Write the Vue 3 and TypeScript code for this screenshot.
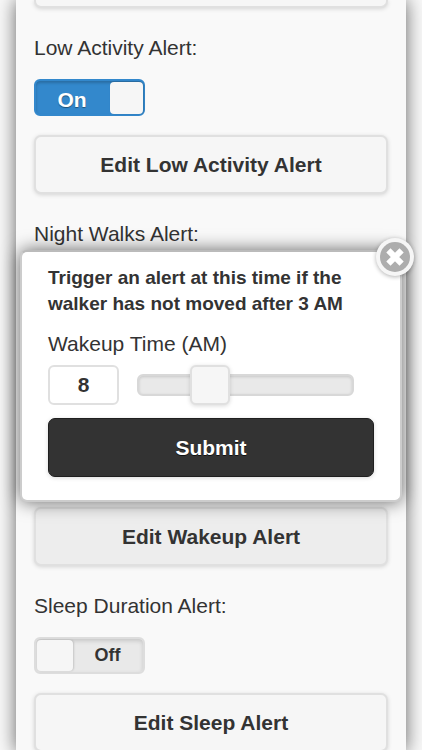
<script setup lang="ts">
import { ref } from 'vue'

const lowActivity = ref(true)
const sleepDuration = ref(false)
const wakeupHour = ref(8)
const popupOpen = ref(true)
</script>

<template>
  <div class="screen">
    <main class="sheet">
      <div class="row-edge"></div>

      <section class="group">
        <label class="caption" for="low-activity">Low Activity Alert:</label>
        <span class="switch" :class="{ on: lowActivity }">
          <input id="low-activity" v-model="lowActivity" type="checkbox" role="switch" />
          <span class="state">{{ lowActivity ? 'On' : 'Off' }}</span>
          <span class="knob"></span>
        </span>
        <button class="btn" type="button">Edit Low Activity Alert</button>
      </section>

      <section class="group">
        <h2 class="caption">Night Walks Alert:</h2>
      </section>

      <section class="group end">
        <button class="btn pressed" type="button" @click="popupOpen = true">Edit Wakeup Alert</button>
      </section>

      <section class="group">
        <label class="caption" for="sleep-duration">Sleep Duration Alert:</label>
        <span class="switch" :class="{ on: sleepDuration }">
          <input id="sleep-duration" v-model="sleepDuration" type="checkbox" role="switch" />
          <span class="state">{{ sleepDuration ? 'On' : 'Off' }}</span>
          <span class="knob"></span>
        </span>
        <button class="btn" type="button">Edit Sleep Alert</button>
      </section>
    </main>

    <form v-if="popupOpen" class="popup" @submit.prevent="popupOpen = false">
      <button class="close" type="button" aria-label="Close" @click="popupOpen = false">
        <svg viewBox="0 0 30 30" width="30" height="30" aria-hidden="true">
          <circle cx="15" cy="15" r="15" fill="#adadad" />
          <path d="M8.400 8.400L21.600 21.600M21.600 8.400L8.400 21.600" stroke="#fff" stroke-width="6" />
        </svg>
      </button>
      <p class="message">Trigger an alert at this time if the walker has not moved after 3 AM</p>
      <label class="field-label" for="wakeup">Wakeup Time (AM)</label>
      <div class="slider-row">
        <input id="wakeup" v-model.number="wakeupHour" class="hour" type="text" inputmode="numeric" />
        <div class="track">
          <input v-model.number="wakeupHour" class="range" type="range" min="6" max="12" aria-label="Wakeup Time (AM)" />
        </div>
      </div>
      <button class="btn submit" type="submit">Submit</button>
    </form>
  </div>
</template>

<style>
body {
  margin: 0;
  background: #f9f9f9;
}
</style>

<style scoped>
.screen,
.screen * {
  box-sizing: border-box;
}
.screen {
  position: relative;
  height: 100vh;
  overflow: hidden;
  font-family: "Liberation Sans", Arial, sans-serif;
  font-size: 21px;
  color: #333;
}
.sheet {
  min-height: 100%;
  margin: 0 16px;
  padding: 0 18px;
  background: #f9f9f9;
  box-shadow: 0 0 18px rgba(0, 0, 0, 0.6);
}
.row-edge {
  height: 8px;
  border: 2px solid #e0e0e0;
  border-top: 0;
  border-radius: 0 0 7px 7px;
  background: #f6f6f6;
  box-shadow: 0 1px 4px rgba(0, 0, 0, 0.15);
}
.group {
  display: flex;
  flex-direction: column;
  align-items: flex-start;
  min-height: 186px;
  padding-top: 28px;
}
.group.end {
  justify-content: flex-end;
}
.caption {
  margin: 0 0 19px;
  font-size: 21px;
  font-weight: 400;
  line-height: 24px;
}
.switch {
  position: relative;
  display: flex;
  align-items: center;
  width: 111px;
  height: 37px;
  margin-bottom: 19px;
  padding: 1px;
  border: 2px solid #ddd;
  border-radius: 6px;
  background: #e9e9e9;
  box-shadow: inset 0 2px 4px rgba(0, 0, 0, 0.15);
  flex-direction: row-reverse;
}
.switch.on {
  flex-direction: row;
  padding: 1px 0 0;
  border-color: #3388cc;
  background: #3388cc;
  color: #fff;
  box-shadow: inset 0 2px 3px rgba(0, 0, 0, 0.2);
}
.switch input {
  position: absolute;
  inset: 0;
  width: 100%;
  height: 100%;
  margin: 0;
  opacity: 0;
  cursor: pointer;
}
.state {
  flex: 1;
  padding-bottom: 2px;
  font-size: 18px;
  font-weight: 700;
  line-height: 24px;
  text-align: center;
}
.on .state {
  padding: 4px 2px 0 0;
  font-size: 21px;
  text-shadow: 0 1px 1px #225377;
}
.knob {
  align-self: stretch;
  width: 36px;
  border-radius: 4px;
  background: #f6f6f6;
  box-shadow: 1px 0 2px rgba(0, 0, 0, 0.15);
}
.on .knob {
  width: 33px;
}
.btn {
  width: 100%;
  height: 59px;
  flex: none;
  padding: 0;
  border: 2px solid #e0e0e0;
  border-radius: 7px;
  background: #f6f6f6;
  color: #333;
  font-family: inherit;
  font-size: 21px;
  font-weight: 700;
  line-height: 26px;
  box-shadow: 0 1px 4px rgba(0, 0, 0, 0.15);
}
.btn.pressed {
  background: #ededed;
}
.popup {
  position: absolute;
  top: 250px;
  left: 20px;
  right: 20px;
  padding: 13px 26px 23px;
  border: 2px solid #ccc;
  border-top-color: #bbb;
  border-radius: 7px;
  background: #fff;
  box-shadow: 0 0 18px rgba(0, 0, 0, 0.6);
}
.message {
  margin: 0 0 14px;
  font-size: 19px;
  font-weight: 700;
  line-height: 26px;
}
.field-label {
  display: block;
  margin-bottom: 8px;
  line-height: 26px;
}
.slider-row {
  display: flex;
  align-items: center;
  gap: 18px;
  margin-bottom: 13px;
  padding-right: 20px;
}
.hour {
  width: 71px;
  height: 40px;
  flex: none;
  padding: 0;
  border: 2px solid #e0e0e0;
  border-radius: 6px;
  background: #fff;
  color: #333;
  font-family: inherit;
  font-size: 21px;
  font-weight: 700;
  text-align: center;
}
.track {
  display: flex;
  align-items: center;
  flex: 1;
  height: 22px;
  min-width: 0;
  border: 2px solid #d8d8d8;
  border-radius: 6px;
  background: #e9e9e9;
  box-shadow: inset 0 1px 3px rgba(0, 0, 0, 0.15);
}
.range {
  appearance: none;
  flex: 1;
  min-width: 0;
  height: 40px;
  margin: 0 -20px;
  background: transparent;
}
.range::-webkit-slider-thumb {
  appearance: none;
  width: 40px;
  height: 40px;
  border: 2px solid #e0e0e0;
  border-radius: 6px;
  background: #f6f6f6;
  box-shadow: 0 1px 4px rgba(0, 0, 0, 0.15);
}
.btn.submit {
  display: block;
  border: 1px solid #1f1f1f;
  background: #333;
  color: #fff;
  text-shadow: 0 1px 0 #111;
}
.close {
  position: absolute;
  top: -14px;
  right: -14px;
  display: flex;
  width: 38px;
  height: 38px;
  padding: 4px;
  border: 0;
  border-radius: 50%;
  background: #f6f6f6;
  box-shadow: 0 1px 4px rgba(0, 0, 0, 0.3);
}
</style>
